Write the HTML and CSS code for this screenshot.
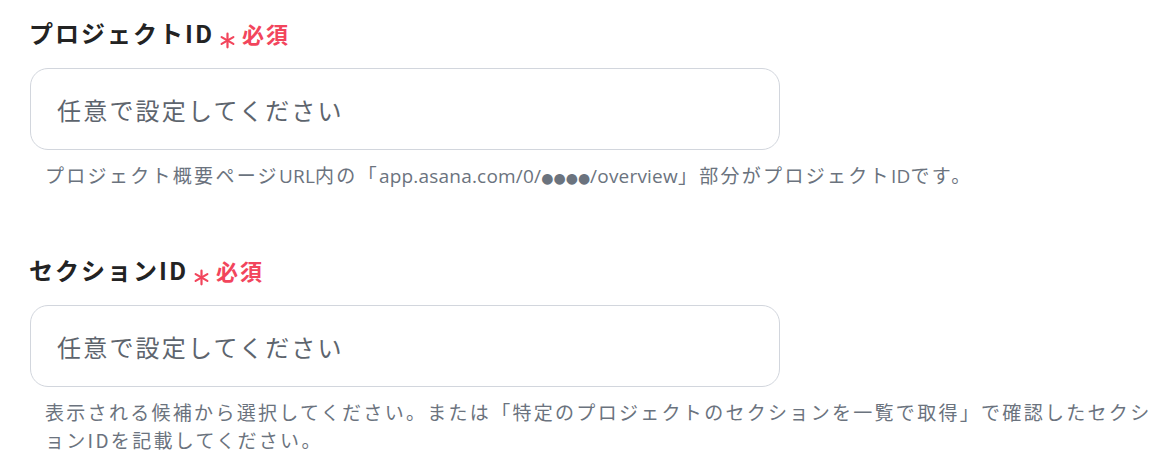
FILE: index.html
```html
<!DOCTYPE html>
<html lang="ja">
<head>
<meta charset="utf-8">
<title>Asana設定</title>
<link rel="stylesheet" href="styles.css">
</head>
<body>
<form class="form">
  <div class="field">
    <div class="label-row">
      <span class="label">プロジェクトID</span>
      <svg class="req-mark" viewBox="0 0 20 20" aria-hidden="true"><g stroke="currentColor" stroke-width="2.6" stroke-linecap="round"><line x1="10" y1="2" x2="10" y2="18"/><line x1="3.1" y1="6" x2="16.9" y2="14"/><line x1="3.1" y1="14" x2="16.9" y2="6"/></g></svg>
      <span class="required">必須</span>
    </div>
    <input class="input" type="text" placeholder="任意で設定してください">
    <p class="help">プロジェクト概要ページ<span class="latin">URL</span>内の「<span class="latin">app.asana.com/0/<span class="dots">●●●●</span>/overview</span>」部分がプロジェクト<span class="latin">ID</span>です。</p>
  </div>
  <div class="field">
    <div class="label-row">
      <span class="label">セクションID</span>
      <svg class="req-mark" viewBox="0 0 20 20" aria-hidden="true"><g stroke="currentColor" stroke-width="2.6" stroke-linecap="round"><line x1="10" y1="2" x2="10" y2="18"/><line x1="3.1" y1="6" x2="16.9" y2="14"/><line x1="3.1" y1="14" x2="16.9" y2="6"/></g></svg>
      <span class="required">必須</span>
    </div>
    <input class="input" type="text" placeholder="任意で設定してください">
    <p class="help">表示される候補から選択してください。または「特定のプロジェクトのセクションを一覧で取得」で確認したセクションIDを記載してください。</p>
  </div>
</form>
</body>
</html>
```
FILE: styles.css
```css
html, body {
  margin: 0;
  padding: 0;
  background: #ffffff;
}
body {
  font-family: "Noto Sans CJK JP", "Noto Sans", sans-serif;
  color: #222222;
}
.form {
  display: flex;
  flex-direction: column;
  gap: 63px;
  padding: 15px 0 0 29px;
}
.field {
  display: flex;
  flex-direction: column;
}
.label-row {
  display: flex;
  align-items: center;
  height: 36px;
}
.label {
  font-size: 24px;
  font-weight: 700;
  letter-spacing: 2px;
  line-height: 36px;
  color: #232323;
}
.req-mark {
  width: 17px;
  height: 17px;
  color: #f2455c;
  margin: 14px 6px 0 5px;
}
.required {
  font-size: 22px;
  font-weight: 700;
  letter-spacing: 2px;
  color: #f2455c;
  line-height: 36px;
}
.input {
  box-sizing: border-box;
  width: 750px;
  height: 82px;
  margin: 17px 0 0 1px;
  padding: 0 0 0 26px;
  border: 1px solid #d2d6dd;
  border-radius: 18px;
  background: #ffffff;
  font-family: "Noto Sans CJK JP", sans-serif;
  font-size: 24px;
  letter-spacing: 2.2px;
  color: #333;
  outline: none;
}
.input::placeholder {
  color: #5d646d;
  opacity: 1;
}
.help {
  margin: 11px 0 0 16px;
  width: 1110px;
  font-size: 19px;
  letter-spacing: 2.3px;
  line-height: 28px;
  color: #6b737e;
}
.latin {
  font-family: "Open Sans", "Noto Sans", sans-serif;
  font-size: 19px;
  letter-spacing: 0.2px;
  line-height: 1;
}
.dots {
  font-family: "DejaVu Sans", sans-serif;
  font-size: 14px;
  letter-spacing: 0;
  line-height: 1;
}
```
